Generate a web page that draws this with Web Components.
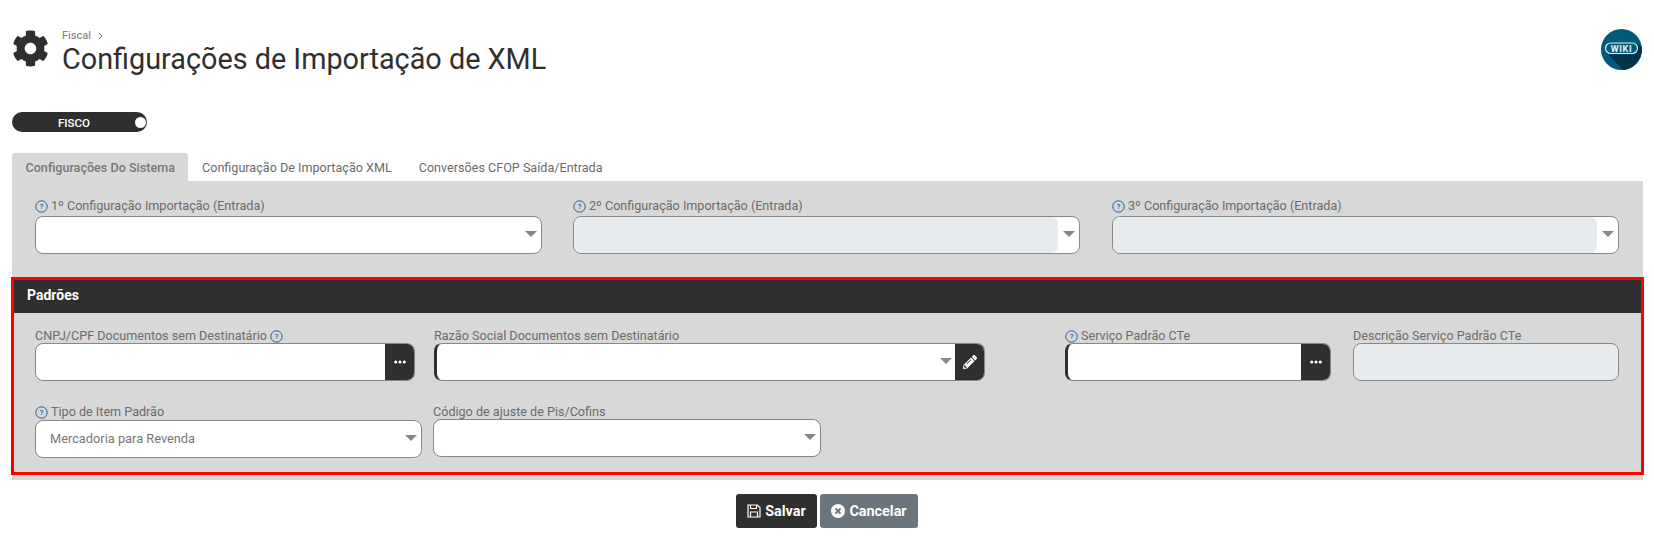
<!DOCTYPE html>
<html lang="pt-BR">
<head>
<meta charset="utf-8">
<title>Configurações de Importação de XML</title>
<style>
  html, body { margin: 0; background: #fff; }
  body { font-family: Roboto, "Liberation Sans", sans-serif; }
</style>
</head>
<body>
<config-page></config-page>

<script>
const GEAR = "M487.4 315.7l-42.6-24.6c4.3-23.2 4.3-47 0-70.2l42.6-24.6c4.9-2.8 7.1-8.6 5.5-14-11.1-35.6-30-67.8-54.7-94.6-3.8-4.1-10-5.1-14.8-2.3L380.8 110c-17.9-15.4-38.5-27.3-60.8-35.1V25.8c0-5.6-3.9-10.5-9.4-11.7-36.7-8.2-74.3-7.8-109.2 0-5.5 1.2-9.4 6.1-9.4 11.7V75c-22.2 7.9-42.8 19.8-60.8 35.1L88.7 85.5c-4.9-2.8-11-1.9-14.8 2.3-24.7 26.7-43.6 58.9-54.7 94.6-1.7 5.4.6 11.2 5.5 14L67.3 221c-4.3 23.2-4.3 47 0 70.2l-42.6 24.6c-4.9 2.8-7.1 8.6-5.5 14 11.1 35.6 30 67.8 54.7 94.6 3.8 4.1 10 5.1 14.8 2.3l42.6-24.6c17.9 15.4 38.5 27.3 60.8 35.1v49.2c0 5.6 3.9 10.5 9.4 11.7 36.7 8.2 74.3 7.8 109.2 0 5.5-1.2 9.4-6.1 9.4-11.7v-49.2c22.2-7.9 42.8-19.8 60.8-35.1l42.6 24.6c4.9 2.8 11 1.9 14.8-2.3 24.7-26.7 43.6-58.9 54.7-94.6 1.5-5.5-.7-11.3-5.6-14.1zM256 336c-44.1 0-80-35.9-80-80s35.9-80 80-80 80 35.9 80 80-35.9 80-80 80z";
const PENCIL = "M497.9 142.1l-46.1 46.1c-4.7 4.7-12.3 4.7-17 0l-111-111c-4.7-4.7-4.7-12.3 0-17l46.1-46.1c18.7-18.7 49.1-18.7 67.9 0l60.1 60.1c18.8 18.7 18.8 49.1 0 67.9zM284.2 99.8L21.6 362.4.4 483.9c-2.9 16.4 11.4 30.6 27.8 27.8l121.5-21.3 262.6-262.6c4.7-4.7 4.7-12.3 0-17l-111-111c-4.8-4.7-12.4-4.7-17.1 0zM124.1 339.9c-5.5-5.5-5.5-14.3 0-19.8l154-154c5.5-5.5 14.3-5.5 19.8 0s5.5 14.3 0 19.8l-154 154c-5.5 5.5-14.3 5.5-19.8 0zM88 424h48v36.3l-64.5 11.3-31.1-31.1L51.7 376H88v48z";

class PageHeader extends HTMLElement {
    constructor() {
        super();
        this.attachShadow({mode: "open"});
        this.shadowRoot.innerHTML = `
        <style>
          :host{ display:flex; align-items:flex-start; padding:29px 1px 0 0; height:47px; color:#2f2f2f; }
          .gear{ width:37px; height:37px; fill:#2f2f2f; flex:none; margin-top:1px; }
          .text{ margin-left:13px; flex:1; padding-top:1px; }
          .crumb{ display:flex; align-items:center; gap:7px; font-size:11px; line-height:12px; color:#777; height:11px; }
          h1{ margin:0; font-size:28.8px; font-weight:400; line-height:36px; }
          .wiki{ width:41px; height:41px; flex:none; }
        </style>
        <svg class="gear" viewBox="0 0 512 512"><path d="${GEAR}"/></svg>
        <div class="text">
          <div class="crumb">Fiscal <svg width="5" height="8" viewBox="0 0 5 8" fill="none" stroke="#777" stroke-width="1"><path d="M.7.7 4 4 .7 7.3"/></svg></div>
          <h1><slot></slot></h1>
        </div>
        <svg class="wiki" viewBox="0 0 41 41">
          <defs><clipPath id="c"><circle cx="20.5" cy="20.5" r="20.5"/></clipPath></defs>
          <circle cx="20.5" cy="20.5" r="20.5" fill="#015a78"/>
          <path clip-path="url(#c)" d="M6 24 L36 14 L42 20 L42 42 L23 42 Z" fill="#02334a"/>
          <rect x="4.5" y="14" width="32" height="10.5" rx="5.25" fill="#015a78" stroke="#e6eef2" stroke-width="1.2"/>
          <text x="20.5" y="22.5" text-anchor="middle" font-family="Roboto, sans-serif" font-weight="700" font-size="9" letter-spacing=".7" fill="#eef4f6">WIKI</text>
        </svg>
        `;
    }
}
customElements.define("page-header", PageHeader);

class ModuleToggle extends HTMLElement {
    constructor() {
        super();
        this.attachShadow({mode: "open"});
        this.shadowRoot.innerHTML = `
        <style>
          :host{ display:flex; align-items:center; width:135px; height:20px; box-sizing:border-box; background:#2f2f2f; border-radius:10px; color:#fff; font-size:11.5px; font-weight:500; padding-right:1px; }
          .label{ width:124px; text-align:center; padding-top:1px; }
          .knob{ width:11px; height:11px; border-radius:50%; background:#fff; margin-left:-1px; }
        </style>
        <span class="label"><slot></slot></span><span class="knob"></span>
        `;
    }
}
customElements.define("module-toggle", ModuleToggle);

class TabBar extends HTMLElement {
    constructor() {
        super();
        this.attachShadow({mode: "open"});
        this.shadowRoot.innerHTML = `
        <style>
          :host{ display:flex; height:28px; }
        </style>
        <slot></slot>
        `;
    }
}
customElements.define("tab-bar", TabBar);

class TabItem extends HTMLElement {
    constructor() {
        super();
        this.attachShadow({mode: "open"});
        this.shadowRoot.innerHTML = `
        <style>
          :host{ display:block; height:28px; padding:0 13.5px; font-size:12.6px; line-height:30px; color:#6b6b6b; border-radius:3px 3px 0 0; }
          :host([active]){ background:#d8d8d8; color:#777; font-weight:500; padding-right:12.5px; margin-right:1px; }
        </style>
        <slot></slot>
        `;
    }
}
customElements.define("tab-item", TabItem);

// label + control; kind: select | lookup | edit | disabled | partial
class FormField extends HTMLElement {
    constructor() {
        super();
        this.attachShadow({mode: "open"});
        const help = this.getAttribute("help");
        const kind = this.getAttribute("kind") || "select";
        const hint = `<svg class="hint" viewBox="0 0 13 13"><circle cx="6.5" cy="6.5" r="5.7" fill="none" stroke="#1f5c9e" stroke-width="1"/><text x="6.5" y="9.2" text-anchor="middle" font-family="Roboto, sans-serif" font-size="7.5" font-weight="500" fill="#1f5c9e">?</text></svg>`;
        const arrow = `<span class="arrow"></span>`;
        let tail = "";
        if (kind === "select" || kind === "partial") tail = arrow;
        if (kind === "edit") tail = arrow + `<span class="btn"><svg viewBox="0 0 512 512" width="14" height="14"><path fill="#fff" d="${PENCIL}"/></svg></span>`;
        if (kind === "lookup") tail = `<span class="btn"><svg viewBox="0 0 14 4" width="12" height="4"><circle cx="2" cy="2" r="1.8" fill="#fff"/><circle cx="7" cy="2" r="1.8" fill="#fff"/><circle cx="12" cy="2" r="1.8" fill="#fff"/></svg></span>`;
        this.shadowRoot.innerHTML = `
        <style>
          :host{ display:block; font-size:12.6px; color:#6b6b6b; }
          .label{ display:flex; align-items:flex-start; height:var(--label-h, 15px); line-height:16px; gap:3px; white-space:nowrap; }
          .hint{ width:13px; height:13px; flex:none; margin-top:2px; }
          .box{ display:flex; align-items:center; height:38px; box-sizing:border-box; background:#fff; border:1px solid #888; border-radius:8px; overflow:hidden; }
          .value{ flex:1; padding:0 0 2px 14px; color:#777; font-size:12.8px; white-space:nowrap; }
          .arrow{ flex:none; width:0; height:0; border-left:6px solid transparent; border-right:6px solid transparent; border-top:6px solid #888; margin:0 4px 2px 5px; }
          .btn{ flex:none; width:30px; align-self:stretch; margin:-1px; background:#2f2f2f; display:flex; align-items:center; justify-content:center; }
          :host([marked]) .box{ border-left:3px solid #2f2f2f; }
          :host([kind=disabled]) .box{ background:#e8ebee; }
          :host([kind=partial]) .value{ align-self:stretch; background:#e8ebee; border-radius:7px; flex:1; }
        </style>
        <div class="label">${help === "before" ? hint : ""}<span>${this.getAttribute("label")}</span>${help === "after" ? hint : ""}</div>
        <div class="box"><span class="value"><slot></slot></span>${tail}</div>
        `;
    }
}
customElements.define("form-field", FormField);

class FormSection extends HTMLElement {
    constructor() {
        super();
        this.attachShadow({mode: "open"});
        this.shadowRoot.innerHTML = `
        <style>
          :host{ display:block; margin:0 -1px 0 -1px; border:3px solid #f00; }
          .head{ background:#2f2f2f; color:#fff; height:33px; line-height:31px; padding-left:13px; font-size:14px; font-weight:700; }
          .body{ padding:15px 20px 14px 21px; display:flex; flex-direction:column; gap:23px; }
        </style>
        <div class="head">${this.getAttribute("title")}</div>
        <div class="body"><slot></slot></div>
        `;
    }
}
customElements.define("form-section", FormSection);

class ActionButton extends HTMLElement {
    constructor() {
        super();
        this.attachShadow({mode: "open"});
        this.shadowRoot.innerHTML = `
        <style>
          :host{ display:flex; align-items:center; justify-content:center; gap:4px; height:34px; border-radius:3px; background:#2f2f2f; color:#fff; font-size:14.4px; font-weight:700; }
          :host([muted]){ background:#6c757d; }
          ::slotted(svg){ flex:none; }
        </style>
        <slot name="icon"></slot><slot></slot>
        `;
    }
}
customElements.define("action-button", ActionButton);

class ConfigPage extends HTMLElement {
    constructor() {
        super();
        this.attachShadow({mode: "open"});
        this.shadowRoot.innerHTML = `
        <style>
          :host{ display:block; padding:0 11px 0 12px; }
          module-toggle{ margin-top:36px; }
          tab-bar{ margin-top:21px; }
          .panel{ background:#d8d8d8; padding:17px 0 5px; }
          .top{ display:grid; grid-template-columns:repeat(3, 506.5px); column-gap:32px; padding:0 24px 0 23px; margin-bottom:23px; --label-h:18px; }
          .mid{ margin-left:-.5px; }
          .row{ display:flex; }
          .w380{ width:380px; } .w551{ width:551px; margin-left:19px; }
          .w266{ width:266px; margin-left:80px; } .w265{ width:266px; margin-left:22px; }
          .w387{ width:387px; --label-h:16px; } .w388{ width:388px; margin-left:11px; }
          .actions{ display:flex; justify-content:center; gap:3px; margin-top:14px; padding-right:1px; }
          .save{ width:81px; } .cancel{ width:98px; }
        </style>
        <page-header>Configurações de Importação de XML</page-header>
        <module-toggle>FISCO</module-toggle>
        <tab-bar>
          <tab-item active>Configurações Do Sistema</tab-item>
          <tab-item>Configuração De Importação XML</tab-item>
          <tab-item>Conversões CFOP Saída/Entrada</tab-item>
        </tab-bar>
        <div class="panel">
          <div class="top">
            <form-field help="before" label="1º Configuração Importação (Entrada)"></form-field>
            <form-field class="mid" help="before" kind="partial" label="2º Configuração Importação (Entrada)"></form-field>
            <form-field help="before" kind="partial" label="3º Configuração Importação (Entrada)"></form-field>
          </div>
          <form-section title="Padrões">
            <div class="row">
              <form-field class="w380" help="after" kind="lookup" label="CNPJ/CPF Documentos sem Destinatário"></form-field>
              <form-field class="w551" marked kind="edit" label="Razão Social Documentos sem Destinatário"></form-field>
              <form-field class="w266" marked help="before" kind="lookup" label="Serviço Padrão CTe"></form-field>
              <form-field class="w265" kind="disabled" label="Descrição Serviço Padrão CTe"></form-field>
            </div>
            <div class="row">
              <form-field class="w387" help="before" label="Tipo de Item Padrão">Mercadoria para Revenda</form-field>
              <form-field class="w388" label="Código de ajuste de Pis/Cofins"></form-field>
            </div>
          </form-section>
        </div>
        <div class="actions">
          <action-button class="save">
            <svg slot="icon" width="14" height="14" viewBox="0 0 14 14" fill="none" stroke="#fff" stroke-width="1.2"><path d="M1 1h9.5L13 3.5V13H1z"/><path d="M3.5 1v3.5h6V1M3.5 13V8h7v5"/></svg>
            Salvar
          </action-button>
          <action-button class="cancel" muted>
            <svg slot="icon" width="14" height="14" viewBox="0 0 14 14"><circle cx="7" cy="7" r="7" fill="#fff"/><path d="M4.5 4.5l5 5M9.5 4.5l-5 5" stroke="#6c757d" stroke-width="1.8"/></svg>
            Cancelar
          </action-button>
        </div>
        `;
    }
}
customElements.define("config-page", ConfigPage);
</script>
</body>
</html>
